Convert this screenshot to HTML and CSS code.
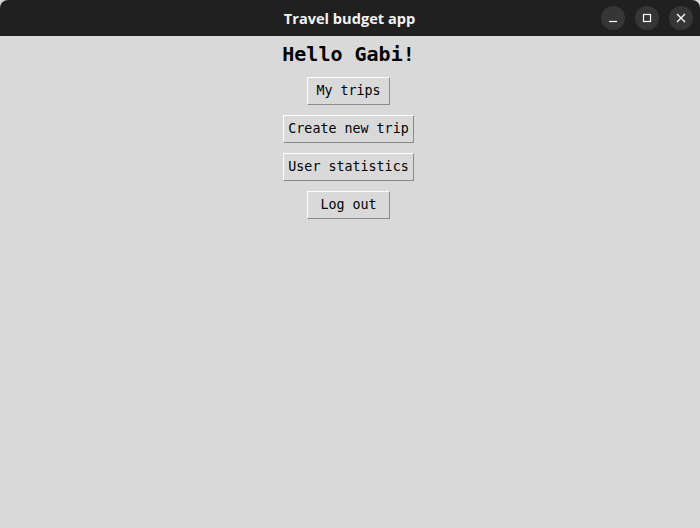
FILE: index.html
```html
<!DOCTYPE html>
<html>
<head>
<meta charset="utf-8">
<title>Travel budget app</title>
<link rel="stylesheet" href="styles.css">
</head>
<body>
<div class="window">
  <header class="titlebar">
    <span class="title">Travel budget app</span>
    <div class="controls">
      <span class="ctl">
        <svg width="10" height="10" viewBox="0 0 10 10"><path d="M1 8.5h8" stroke="#fff" stroke-width="1.2"/></svg>
      </span>
      <span class="ctl">
        <svg width="10" height="10" viewBox="0 0 10 10"><rect x="1.5" y="1.5" width="7" height="7" fill="none" stroke="#fff" stroke-width="1.2"/></svg>
      </span>
      <span class="ctl">
        <svg width="10" height="10" viewBox="0 0 10 10"><path d="M1 1L9 9M9 1L1 9" stroke="#fff" stroke-width="1.3"/></svg>
      </span>
    </div>
  </header>
  <main class="content">
    <h1 class="greeting">Hello Gabi!</h1>
    <button class="btn">My trips</button>
    <button class="btn">Create new trip</button>
    <button class="btn">User statistics</button>
    <button class="btn">Log out</button>
  </main>
</div>
</body>
</html>
```

FILE: styles.css
```css
html, body {
  margin: 0;
  padding: 0;
  background: #d9d9d9;
}

.window {
  width: 700px;
  height: 528px;
  display: flex;
  flex-direction: column;
  background: #d9d9d9;
}

.titlebar {
  height: 36px;
  flex: none;
  background: #202020;
  border-radius: 8px 8px 0 0;
  display: flex;
  align-items: center;
  justify-content: center;
  position: relative;
}

.title {
  font-family: "Open Sans", "DejaVu Sans", sans-serif;
  font-weight: 700;
  font-size: 14.6px;
  color: #f2f2f2;
  letter-spacing: 0;
  margin-right: 1px;
}

.controls {
  position: absolute;
  right: 7px;
  top: 6px;
  display: flex;
  gap: 10px;
}

.ctl {
  width: 24px;
  height: 24px;
  border-radius: 50%;
  background: #363636;
  display: flex;
  align-items: center;
  justify-content: center;
}

.content {
  flex: 1;
  display: flex;
  flex-direction: column;
  align-items: center;
  gap: 10px;
  padding-top: 6px;
  padding-right: 3px;
}

.greeting {
  margin: 0 0 1px 0;
  font-family: "DejaVu Sans Mono", monospace;
  font-weight: 700;
  font-size: 20px;
  line-height: 24px;
  color: #000;
}

.btn {
  box-sizing: border-box;
  min-width: 83px;
  height: 28px;
  padding: 0 4px;
  margin: 0;
  font-family: "DejaVu Sans Mono", monospace;
  font-size: 13.33px;
  line-height: 26px;
  color: #000;
  background: #d9d9d9;
  border: 1px solid;
  border-color: #ffffff #8a8a8a #8a8a8a #ffffff;
  border-radius: 0;
  text-align: center;
}
```
